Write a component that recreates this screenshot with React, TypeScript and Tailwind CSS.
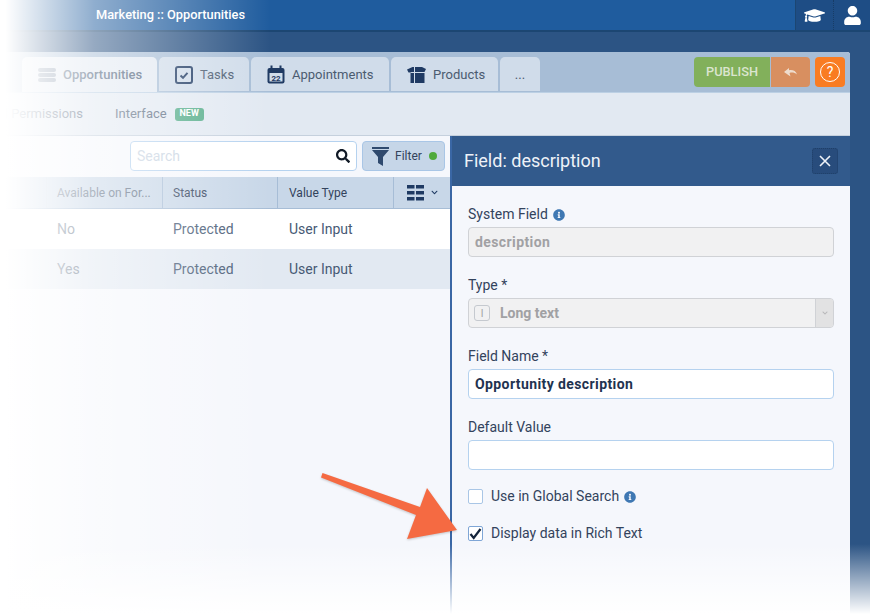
import React from "react";
import { FaGraduationCap, FaUser, FaSearch, FaInfoCircle, FaChevronDown } from "react-icons/fa";

const Tab = ({ icon, label, active, w, center }: { icon?: React.ReactNode; label: string; active?: boolean; w: string; center?: boolean }) => (
  <div className={`${w} h-[35px] flex items-center gap-[7px] rounded-t-[5px] text-[13px] mr-[2px] ${center ? "justify-center" : "pl-[16px]"} ${active ? "bg-[#e2e9f2] font-medium text-[#4a5e78]" : "bg-[#d0dcea] text-[#4b5b70] border-b border-[#a7bdd6] pt-px"}`}>
    {icon}
    <span>{label}</span>
  </div>
);

const Label = ({ children }: { children: React.ReactNode }) => (
  <div className="h-[17px] flex items-center gap-[5px] text-[14px] leading-[17px] text-[#33435c]">{children}</div>
);

const Info = () => <FaInfoCircle className="text-[#3f78b3] w-[12px] h-[12px]" />;

const CellHead = ({ w, children, muted }: { w: string; children: React.ReactNode; muted?: boolean }) => (
  <div className={`${w} h-full flex items-center pl-[10px] border-r border-[#a7bdd6] text-[12px] ${muted ? "text-[#5a6b80]" : "text-[#33435c]"}`}>{children}</div>
);

const Row = ({ avail, alt }: { avail: string; alt?: boolean }) => (
  <div className={`h-[40px] flex items-center text-[14px] text-[#475a75] ${alt ? "bg-[#e2e9f2]" : "bg-white"}`}>
    <div className="w-[57px] shrink-0" />
    <div className="w-[116px] shrink-0 text-[#5a6b80]">{avail}</div>
    <div className="w-[116px] shrink-0">Protected</div>
    <div>User Input</div>
  </div>
);

export default function App() {
  return (
    <div className="relative w-[870px] h-[614px] overflow-hidden bg-[#2c5484] font-['Roboto',sans-serif]">
      <div className="h-[32px] bg-[#1f5c9e] border-b-2 border-[#1c4672] flex items-center justify-between">
        <div className="pl-[96px] text-[12.8px] font-medium text-white">Marketing :: Opportunities</div>
        <div className="flex h-[30px]">
          <div className="w-[38px] bg-[#1e4d85] border-l border-[#1c4672] flex items-center justify-center">
            <FaGraduationCap className="text-white w-[21px] h-[21px]" />
          </div>
          <div className="w-[37px] bg-[#1e4d85] border-l border-dotted border-[#173c66] flex items-center justify-center">
            <FaUser className="text-white w-[19px] h-[19px]" />
          </div>
        </div>
      </div>

      <div className="ml-0 mr-[20px] mt-[20px] rounded-tr-[3px] overflow-hidden h-[562px] bg-[#f5f7fc]">
        <div className="h-[41px] bg-[#a7bdd6] border-b border-[#bcd0e4] flex pl-[22px] pt-[5px] relative">
          <Tab w="w-[135px]" active label="Opportunities" icon={
            <svg width="18" height="16" viewBox="0 0 18 16" fill="#8292a8"><rect x="0" y="1" width="18" height="4" rx="2"/><rect x="0" y="6" width="18" height="4" rx="2"/><rect x="0" y="11" width="18" height="4" rx="2"/></svg>
          } />
          <Tab w="w-[90px]" label="Tasks" icon={
            <svg width="18" height="18" viewBox="0 0 18 18" fill="none" stroke="#1f3a63"><rect x="1" y="1" width="16" height="16" rx="2" strokeWidth="2"/><path d="M5.500 9.500l2.500 2.300 4.500-5" strokeWidth="2"/></svg>
          } />
          <Tab w="w-[138px]" label="Appointments" icon={
            <svg width="18" height="19" viewBox="0 0 18 19"><rect x="0.500" y="3" width="17" height="15.500" rx="2" fill="#1f3a63"/><rect x="3.500" y="0.500" width="2" height="4" fill="#1f3a63"/><rect x="12.500" y="0.500" width="2" height="4" fill="#1f3a63"/><rect x="2.500" y="8" width="13" height="8.500" fill="#d0dcea"/><text x="9" y="15.500" textAnchor="middle" fontSize="8" fontWeight="700" fill="#1f3a63" fontFamily="Roboto">22</text></svg>
          } />
          <Tab w="w-[107px]" label="Products" icon={
            <svg width="19" height="16" viewBox="0 0 19 16" fill="#1f3a63"><path d="M0 2.500L5.500 0h1.500v5H4.500L3.500 5.500H1.500z"/><path d="M8 0h7l4 2-1.500 3H8z"/><rect x="3.500" y="6" width="3.500" height="10"/><rect x="8" y="6" width="9.500" height="10"/></svg>
          } />
          <Tab w="w-[40px]" center label="..." />
          <div className="ml-auto flex h-[30px] pr-[5px]">
            <div className="w-[76px] bg-[#82b05b] rounded-l-[4px] text-[12.8px] font-medium text-[#dbe5cf] flex items-center justify-center">PUBLISH</div>
            <div className="w-[39px] ml-[1px] bg-[#d88f60] rounded-r-[4px] flex items-center justify-center">
              <svg width="13" height="10" viewBox="0 0 13 10" fill="#eedccd"><path d="M0 5L5 1v2.300C8.500 2.500 12 4 13 7.500 10.500 5.500 8 5.200 5.500 6L6.500 9.500z"/></svg>
            </div>
            <div className="w-[30px] ml-[5px] bg-[#f97c22] rounded-[4px] flex items-center justify-center">
              <div className="w-[20px] h-[20px] rounded-full border border-white flex items-center justify-center text-white text-[14px] leading-none">?</div>
            </div>
          </div>
        </div>

        <div className="h-[43px] bg-[#e2e9f2] border-b border-[#c5d0dd] flex items-center text-[13px] text-[#5a6b80]">
          <div className="w-[83px] text-right whitespace-nowrap">d Permissions</div>
          <div className="ml-[32px]">Interface</div>
          <div className="ml-[8px] h-[13px] w-[29px] rounded-[3px] bg-[#55ad8a] text-white text-[9px] font-bold flex items-center justify-center">NEW</div>
        </div>

        <div className="flex h-[478px]">
          <div className="w-[450px] shrink-0">
            <div className="h-[41px] flex items-start justify-end pt-[5px] pr-[5px] gap-[5px]">
              <div className="w-[227px] h-[30px] bg-white border border-[#b5d2ef] rounded-[4px] flex items-center justify-between pl-[6px] pr-[6px]">
                <span className="text-[14px] text-[#c8d4e2]">Search</span>
                <FaSearch className="w-[14px] h-[14px] text-[#111a26]" />
              </div>
              <div className="w-[83px] h-[30px] bg-[#c6d6e8] border border-[#a9c6e6] rounded-[4px] flex items-center pl-[9px]">
                <svg width="17" height="19" viewBox="0 0 17 19" fill="#2f4a6e"><rect x="0" y="0" width="17" height="2"/><path d="M0 3h17l-6 7v9l-5-3v-6z"/></svg>
                <span className="ml-[6px] text-[12px] text-[#33435c]">Filter</span>
                <span className="ml-[7px] w-[8px] h-[8px] rounded-full bg-[#4faa3c]" />
              </div>
            </div>
            <div className="h-[32px] bg-[#c8d7e8] border-b border-[#a7bdd6] flex items-center">
              <div className="w-[47px] h-full border-r border-[#c5d3e2]" />
              <CellHead w="w-[116px]" muted>Available on For...</CellHead>
              <CellHead w="w-[115px]">Status</CellHead>
              <CellHead w="w-[116px]"><span className="ml-px">Value Type</span></CellHead>
              <div className="flex-1 flex items-center pl-[13px] gap-[7px]">
                <svg width="17" height="16" viewBox="0 0 17 16" fill="#1f3a63"><rect x="0" y="0" width="7.500" height="3.500"/><rect x="9" y="0" width="8" height="3.500"/><rect x="0" y="6" width="7.500" height="3.500"/><rect x="9" y="6" width="8" height="3.500"/><rect x="0" y="12" width="7.500" height="3.500"/><rect x="9" y="12" width="8" height="3.500"/></svg>
                <FaChevronDown className="w-[7px] h-[7px] text-[#1f3a63]" />
              </div>
            </div>
            <Row avail="No" />
            <Row avail="Yes" alt />
          </div>

          <div className="w-[400px] shrink-0 border-l-2 border-[#3a67a5]">
            <div className="h-[50px] bg-[#325a8c] flex items-center justify-between pl-[12px] pr-[12px]">
              <span className="text-[18px] text-[#eef2f8] pb-[2px]">Field: description</span>
              <div className="w-[26px] h-[26px] bg-[#284c7c] border border-dotted border-[#1f3f68] rounded-[3px] flex items-center justify-center">
                <svg width="14" height="14" viewBox="0 0 14 14" fill="none" stroke="#eef2f8" strokeWidth="1.600"><path d="M2 2l10 10M12 2L2 12"/></svg>
              </div>
            </div>
            <div className="pl-[16px] pr-[16px] pt-[20px]">
              <Label>System Field <Info /></Label>
              <div className="mt-[4px] h-[30px] bg-[#f1f1f2] border border-[#d0d2d6] rounded-[4px] flex items-center pl-[6px] text-[14px] font-bold tracking-[0.4px] text-[#a1a1a4]">description</div>
              <div className="mt-[20px]"><Label>Type *</Label></div>
              <div className="mt-[4px] h-[30px] bg-[#f1f1f2] border border-[#d0d2d6] rounded-[4px] flex items-center pl-[5px] text-[14px] font-bold text-[#a1a1a4]">
                <div className="w-[16px] h-[16px] border border-[#c5c9cf] rounded-[3px] flex items-center justify-center text-[10px] font-normal text-[#a1a1a4]">I</div>
                <span className="ml-[10px] flex-1">Long text</span>
                <div className="w-[18px] h-full bg-[#e2e2e3] border-l border-[#d0d2d6] rounded-r-[3px] flex items-center justify-center">
                  <FaChevronDown className="w-[6px] h-[6px] text-[#b8b8ba]" />
                </div>
              </div>
              <div className="mt-[20px]"><Label>Field Name *</Label></div>
              <div className="mt-[4px] h-[30px] bg-white border border-[#b5d2ef] rounded-[4px] flex items-center pl-[6px] text-[14px] font-bold tracking-[0.4px] text-[#1f3350]">Opportunity description</div>
              <div className="mt-[20px]"><Label>Default Value</Label></div>
              <div className="mt-[4px] h-[30px] bg-white border border-[#b5d2ef] rounded-[4px]" />
              <div className="mt-[19px] h-[15px] flex items-center text-[14px] text-[#33435c]">
                <div className="w-[15px] h-[15px] bg-white border border-[#a9c6e6] rounded-[2px] mr-[8px]" />
                <span className="mr-[5px]">Use in Global Search</span>
                <Info />
              </div>
              <div className="mt-[22px] h-[15px] flex items-center text-[14px] text-[#33435c]">
                <div className="w-[15px] h-[15px] bg-white border border-[#7fa6d6] rounded-[2px] mr-[8px] flex items-center justify-center">
                  <svg width="13" height="12" viewBox="0 0 13 12" fill="none" stroke="#15243b" strokeWidth="2.200"><path d="M1.500 6l3.200 4 6.800-9"/></svg>
                </div>
                <span>Display data in Rich Text</span>
              </div>
            </div>
          </div>
        </div>
      </div>

      <div className="absolute left-0 top-0 bottom-0 w-[270px] bg-linear-to-r from-white from-[2%] via-white/50 via-[35%] to-transparent pointer-events-none" />
      <div className="absolute left-0 right-0 bottom-0 h-[70px] bg-linear-to-b from-transparent to-white pointer-events-none" />

      <svg className="absolute left-[320px] top-[470px] drop-shadow-[0_1px_1px_rgba(0,0,0,0.2)]" width="140" height="72" viewBox="0 0 140 72" fill="#f56a42">
        <path d="M2.500 3L1 7.500 96 45 87 69 137 60 107 18 100 37z"/>
      </svg>
    </div>
  );
}
